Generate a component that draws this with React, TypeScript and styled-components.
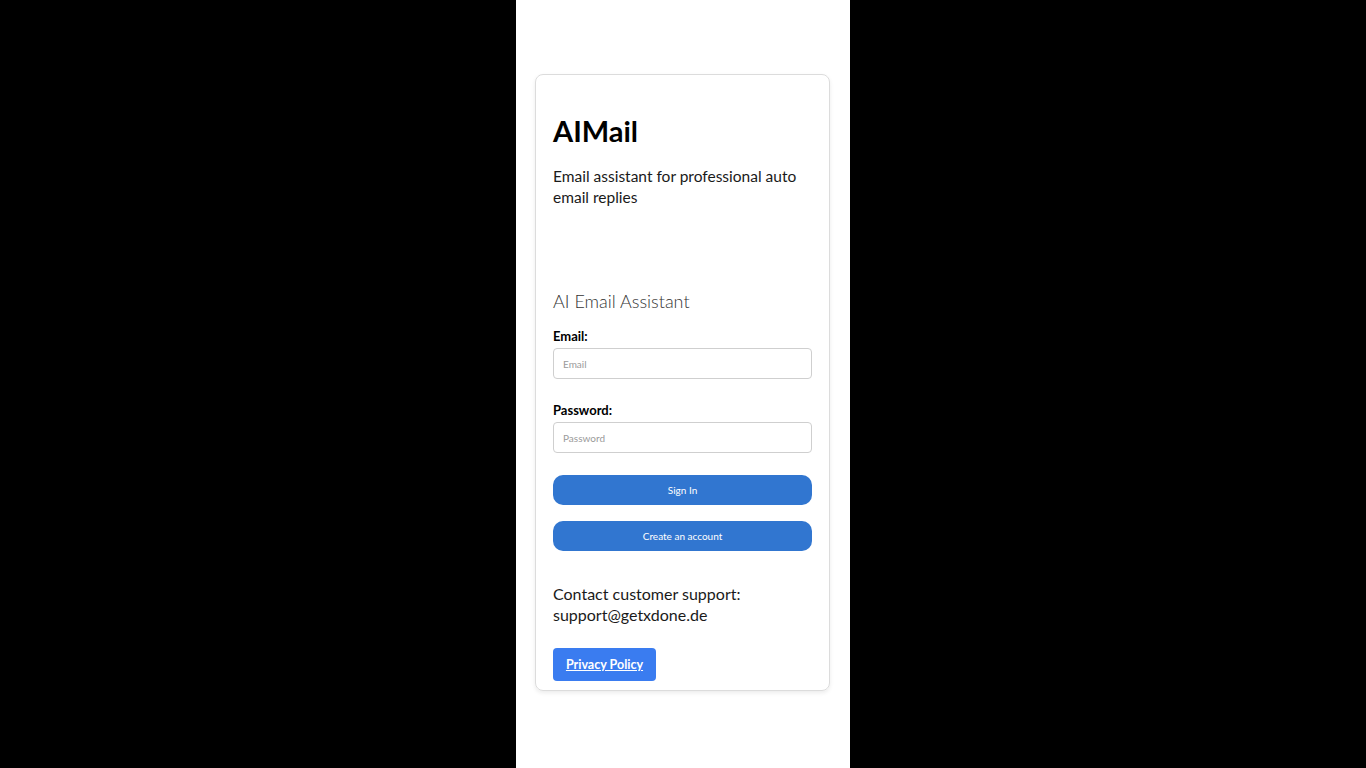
import React from "react";
import styled, { createGlobalStyle } from "styled-components";

const GlobalStyle = createGlobalStyle`
  html, body {
    margin: 0;
    padding: 0;
    background: #000;
  }
  body {
    font-family: "Lato", "Noto Sans", sans-serif;
  }
`;

const App: React.FC = () => {
  return (
    <>
      <GlobalStyle />
      <Page>
        <Card>
          <Header>
            <Titulo>AIMail</Titulo>
            <Subtitulo>Email assistant for professional auto email replies</Subtitulo>
          </Header>

          <Form>
            <FormTitle>AI Email Assistant</FormTitle>
            <Field>
              <Label>Email:</Label>
              <Input type="email" placeholder="Email" />
            </Field>
            <Field>
              <Label>Password:</Label>
              <Input type="password" placeholder="Password" />
            </Field>
            <Button>Sign In</Button>
            <Button>Create an account</Button>
          </Form>

          <Contact>
            Contact customer support:
            <br />
            support@getxdone.de
          </Contact>
          <PrivacyButton href="#">Privacy Policy</PrivacyButton>
        </Card>
      </Page>
    </>
  );
};
export default App;

const Page = styled.div`
  width: 334px;
  min-height: 100vh;
  margin: 0 auto;
  background: #fff;
  padding: 74px 19px 0 19px;
  box-sizing: border-box;
`;

const Card = styled.div`
  width: 295px;
  height: 617px;
  box-sizing: border-box;
  border: 1px solid #dcdcdc;
  border-radius: 8px;
  box-shadow: 0 2px 4px rgba(0, 0, 0, 0.08);
  padding: 34px 17px 0 17px;
`;

const Header = styled.div`
  height: 180px;
`;

const Titulo = styled.h1`
  margin: 0;
  font-size: 29px;
  font-weight: 700;
  color: #000;
  line-height: 44px;
`;

const Subtitulo = styled.p`
  margin: 13px 0 0 0;
  font-size: 15.5px;
  line-height: 21px;
  color: #1a1a1a;
  font-weight: 400;
`;

const Form = styled.div`
  display: flex;
  flex-direction: column;
`;

const FormTitle = styled.h2`
  margin: 0 0 14px 0;
  font-size: 18px;
  font-weight: 300;
  color: #333;
  line-height: 24px;
`;

const Field = styled.div`
  display: flex;
  flex-direction: column;
  margin-bottom: 22px;
`;

const Label = styled.label`
  font-size: 13px;
  font-weight: 700;
  color: #000;
  line-height: 18px;
  margin-bottom: 3px;
`;

const Input = styled.input`
  width: 100%;
  height: 31px;
  box-sizing: border-box;
  border: 1px solid #cfcfcf;
  border-radius: 4px;
  padding: 0 9px;
  font-family: inherit;
  font-size: 10px;
  color: #333;
  outline: none;
  &::placeholder {
    color: #9a9a9a;
  }
`;

const Button = styled.button`
  width: 100%;
  height: 30px;
  border: none;
  border-radius: 10px;
  background-color: #3176d0;
  color: #fff;
  font-family: inherit;
  font-size: 10px;
  cursor: pointer;
  margin-bottom: 16px;
`;

const Contact = styled.p`
  margin: 16px 0 0 0;
  font-size: 16px;
  line-height: 21px;
  color: #1a1a1a;
`;

const PrivacyButton = styled.a`
  display: inline-flex;
  align-items: center;
  justify-content: center;
  margin-top: 23px;
  width: 103px;
  height: 33px;
  border-radius: 4px;
  background-color: #3a7cf0;
  color: #fff;
  font-weight: 700;
  font-size: 12.5px;
  text-decoration: underline;
`;
